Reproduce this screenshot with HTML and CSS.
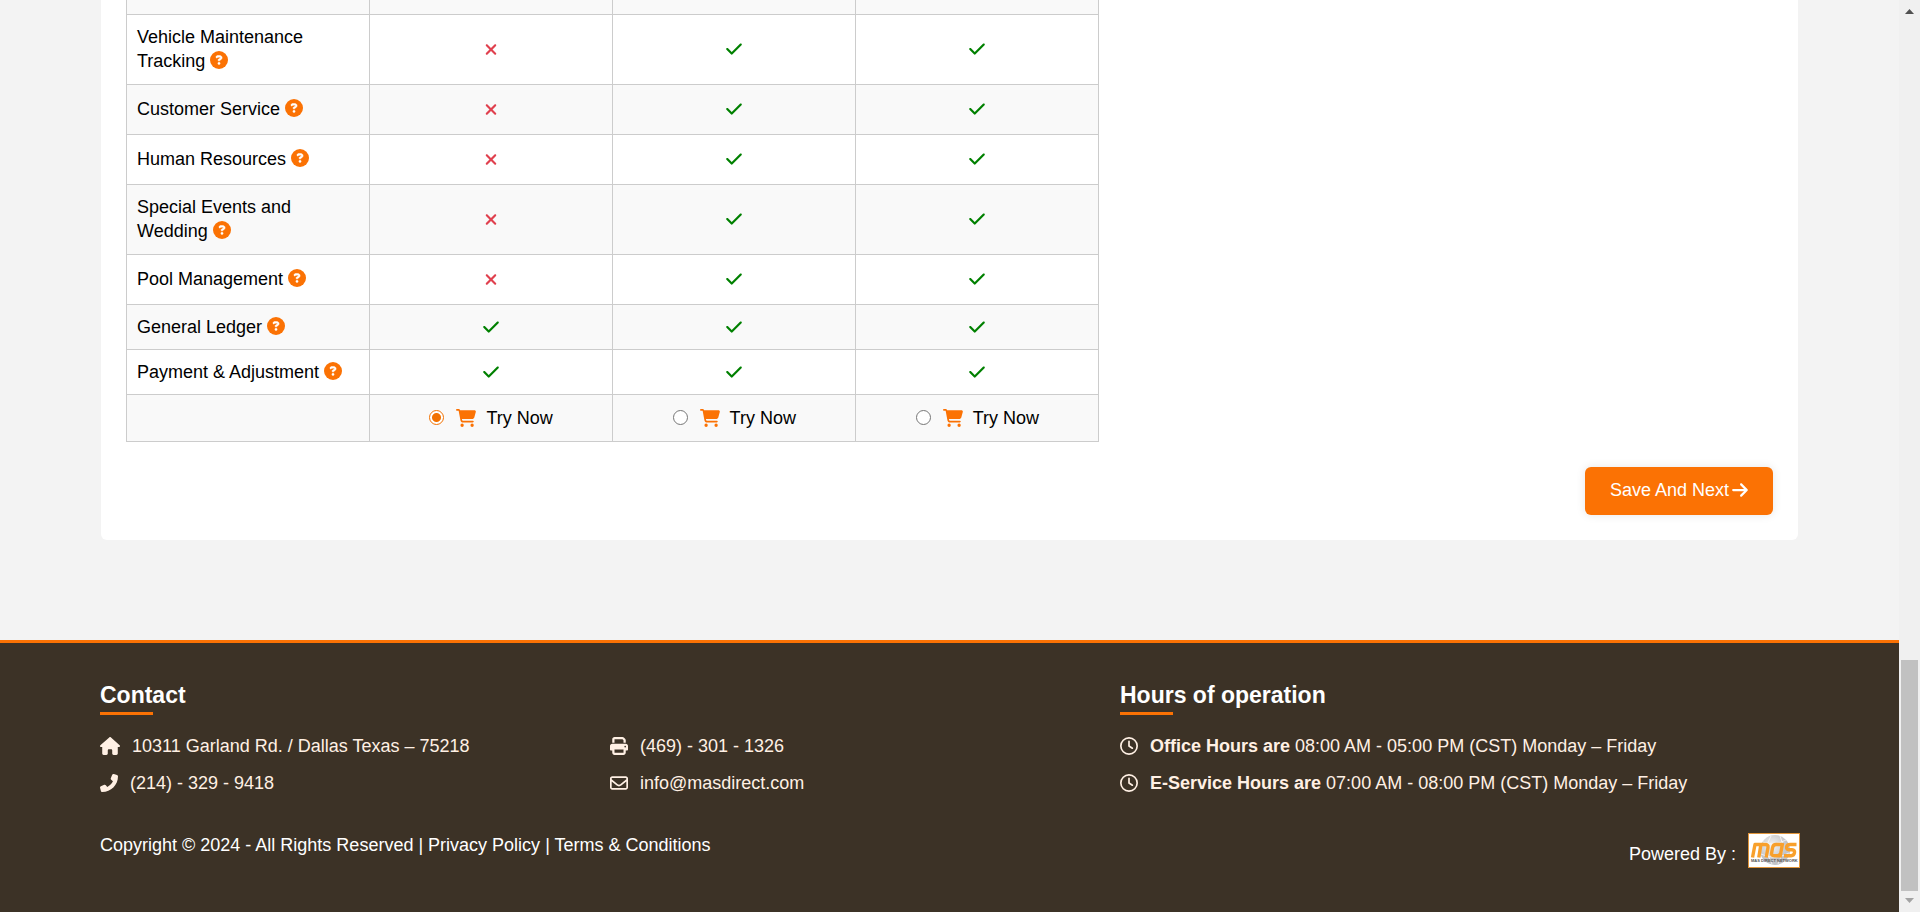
FILE: index.html
```html
<!DOCTYPE html>
<html lang="en">
<head>
<meta charset="utf-8">
<title>Choose a plan</title>
<link rel="stylesheet" href="styles.css">
</head>
<body>
<svg class="sprite" aria-hidden="true">
  <symbol id="help" viewBox="0 0 512 512"><path d="M256 512A256 256 0 1 0 256 0a256 256 0 1 0 0 512z" fill="#fb7204"/><path fill="#fff" stroke="#fff" stroke-width="14" d="M169.8 165.3c7.9-22.3 29.1-37.3 52.8-37.3h58.3c34.9 0 63.1 28.3 63.1 63.1c0 22.6-12.1 43.5-31.7 54.8L280 264.4c-.2 13-10.9 23.6-24 23.6c-13.3 0-24-10.7-24-24V250.5c0-8.6 4.6-16.5 12.1-20.8l44.3-25.4c4.7-2.7 7.6-7.7 7.6-13.1c0-8.4-6.8-15.1-15.1-15.1H222.6c-3.4 0-6.4 2.1-7.5 5.3l-.4 1.2c-4.4 12.5-18.2 19-30.6 14.6s-19-18.2-14.6-30.6l.4-1.2zM224 352a32 32 0 1 1 64 0 32 32 0 1 1 -64 0z"/></symbol>
  <symbol id="check" viewBox="0 0 448 512"><path d="M438.6 105.4c12.5 12.5 12.5 32.8 0 45.3l-256 256c-12.5 12.5-32.8 12.5-45.3 0l-128-128c-12.5-12.5-12.5-32.8 0-45.3s32.8-12.5 45.3 0L160 338.7 393.4 105.4c12.5-12.5 32.8-12.5 45.3 0z"/></symbol>
  <symbol id="cross" viewBox="0 0 384 512"><path d="M342.6 150.6c12.5-12.5 12.5-32.8 0-45.3s-32.8-12.5-45.3 0L192 210.7 86.6 105.4c-12.5-12.5-32.8-12.5-45.3 0s-12.5 32.8 0 45.3L146.7 256 41.4 361.4c-12.5 12.5-12.5 32.8 0 45.3s32.8 12.5 45.3 0L192 301.3 297.4 406.6c12.5 12.5 32.8 12.5 45.3 0s12.5-32.8 0-45.3L237.3 256 342.6 150.6z"/></symbol>
  <symbol id="cart" viewBox="0 0 576 512"><path d="M0 24C0 10.7 10.7 0 24 0H69.5c22 0 41.5 12.8 50.6 32h411c26.3 0 45.5 25 38.6 50.4l-41 152.3c-8.5 31.4-37 53.3-69.5 53.3H170.7l5.4 28.5c2.2 11.3 12.1 19.5 23.6 19.5H488c13.3 0 24 10.7 24 24s-10.7 24-24 24H199.7c-34.6 0-64.3-24.6-70.7-58.5L77.4 54.5c-.7-3.8-4-6.5-7.9-6.5H24C10.7 48 0 37.3 0 24zM128 464a48 48 0 1 1 96 0 48 48 0 1 1 -96 0zm336-48a48 48 0 1 1 0 96 48 48 0 1 1 0-96z"/></symbol>
  <symbol id="arrow" viewBox="0 0 448 512"><path d="M438.6 278.6c12.5-12.5 12.5-32.8 0-45.3l-160-160c-12.5-12.5-32.8-12.5-45.3 0s-12.5 32.8 0 45.3L338.8 224 32 224c-17.7 0-32 14.3-32 32s14.3 32 32 32l306.7 0L233.4 393.4c-12.5 12.5-12.5 32.8 0 45.3s32.8 12.5 45.3 0l160-160z"/></symbol>
  <symbol id="house" viewBox="0 0 576 512"><path d="M575.8 255.5c0 18-15 32.1-32 32.1h-32l.7 160.2c0 2.7-.2 5.4-.5 8.1V472c0 22.1-17.9 40-40 40H456c-1.1 0-2.2 0-3.3-.1c-1.4 .1-2.8 .1-4.2 .1H416 392c-22.1 0-40-17.9-40-40V448 384c0-17.7-14.3-32-32-32H256c-17.7 0-32 14.3-32 32v64 24c0 22.1-17.9 40-40 40H160 128.1c-1.5 0-3-.1-4.5-.2c-1.2 .1-2.4 .2-3.6 .2H104c-22.1 0-40-17.9-40-40V360c0-.9 0-1.9 .1-2.8V287.6H32c-18 0-32-14-32-32.1c0-9 3-17 10-24L266.4 8c7-7 15-8 22-8s15 2 21 7L564.8 231.5c8 7 12 15 11 24z"/></symbol>
  <symbol id="phone" viewBox="0 0 512 512"><path d="M347.1 24.6c7.7-18.6 28-28.5 47.4-23.2l88 24C499.9 30.2 512 46 512 64c0 247.4-200.6 448-448 448c-18 0-33.8-12.1-38.6-29.5l-24-88c-5.3-19.4 4.6-39.7 23.2-47.4l96-40c16.3-6.8 35.2-2.1 46.3 11.6L207.3 368c70.4-33.3 127.4-90.3 160.7-160.7L318.7 167c-13.7-11.2-18.4-30-11.6-46.3l40-96z"/></symbol>
  <symbol id="print" viewBox="0 0 512 512"><path d="M128 0C92.7 0 64 28.7 64 64v96h64V64H354.7L384 93.3V160h64V93.3c0-17-6.7-33.3-18.7-45.3L400 18.7C388 6.7 371.7 0 354.7 0H128zM384 352v32 64H128V384 368 352H384zm64 32h32c17.7 0 32-14.3 32-32V256c0-35.3-28.7-64-64-64H64c-35.3 0-64 28.7-64 64v96c0 17.7 14.3 32 32 32H64v64c0 35.3 28.7 64 64 64H384c35.3 0 64-28.7 64-64V384zM432 248a24 24 0 1 1 0 48 24 24 0 1 1 0-48z"/></symbol>
  <symbol id="mail" viewBox="0 0 512 512"><path d="M64 112c-8.800 0-16 7.200-16 16v22.100L220.500 291.700c20.700 17 50.400 17 71.100 0L464 150.100V128c0-8.800-7.200-16-16-16H64zM48 212.200V384c0 8.800 7.200 16 16 16H448c8.800 0 16-7.200 16-16V212.200L322 328.800c-38.400 31.500-93.700 31.500-132 0L48 212.200zM0 128C0 92.700 28.700 64 64 64H448c35.300 0 64 28.700 64 64V384c0 35.300-28.700 64-64 64H64c-35.300 0-64-28.700-64-64V128z"/></symbol>
  <symbol id="clock" viewBox="0 0 512 512"><path d="M464 256A208 208 0 1 1 48 256a208 208 0 1 1 416 0zM0 256a256 256 0 1 0 512 0A256 256 0 1 0 0 256zM232 120V256c0 8 4 15.500 10.700 20l96 64c11 7.400 25.900 4.400 33.300-6.700s4.400-25.900-6.700-33.300L280 243.200V120c0-13.300-10.700-24-24-24s-24 10.700-24 24z"/></symbol>
</svg>
<div class="page">
  <main class="main">
    <form class="card">
      <table class="plans">
        <tbody>
          <tr class="row-cut"><td></td><td></td><td></td><td></td></tr>
          <tr class="row-tall"><th scope="row">Vehicle Maintenance Tracking <svg class="help"><use href="#help"/></svg></th><td><svg class="icon no"><use href="#cross"/></svg></td><td><svg class="icon yes"><use href="#check"/></svg></td><td><svg class="icon yes"><use href="#check"/></svg></td></tr>
          <tr class="row-mid"><th scope="row">Customer Service <svg class="help"><use href="#help"/></svg></th><td><svg class="icon no"><use href="#cross"/></svg></td><td><svg class="icon yes"><use href="#check"/></svg></td><td><svg class="icon yes"><use href="#check"/></svg></td></tr>
          <tr class="row-mid"><th scope="row">Human Resources <svg class="help"><use href="#help"/></svg></th><td><svg class="icon no"><use href="#cross"/></svg></td><td><svg class="icon yes"><use href="#check"/></svg></td><td><svg class="icon yes"><use href="#check"/></svg></td></tr>
          <tr class="row-tall"><th scope="row">Special Events and Wedding <svg class="help"><use href="#help"/></svg></th><td><svg class="icon no"><use href="#cross"/></svg></td><td><svg class="icon yes"><use href="#check"/></svg></td><td><svg class="icon yes"><use href="#check"/></svg></td></tr>
          <tr class="row-mid"><th scope="row">Pool Management <svg class="help"><use href="#help"/></svg></th><td><svg class="icon no"><use href="#cross"/></svg></td><td><svg class="icon yes"><use href="#check"/></svg></td><td><svg class="icon yes"><use href="#check"/></svg></td></tr>
          <tr class="row-short"><th scope="row">General Ledger <svg class="help"><use href="#help"/></svg></th><td><svg class="icon yes"><use href="#check"/></svg></td><td><svg class="icon yes"><use href="#check"/></svg></td><td><svg class="icon yes"><use href="#check"/></svg></td></tr>
          <tr class="row-short"><th scope="row">Payment &amp; Adjustment <svg class="help"><use href="#help"/></svg></th><td><svg class="icon yes"><use href="#check"/></svg></td><td><svg class="icon yes"><use href="#check"/></svg></td><td><svg class="icon yes"><use href="#check"/></svg></td></tr>
          <tr class="row-try"><td></td>
            <td><label class="try"><input type="radio" name="plan" checked><svg class="cart"><use href="#cart"/></svg>Try Now</label></td>
            <td><label class="try"><input type="radio" name="plan"><svg class="cart"><use href="#cart"/></svg>Try Now</label></td>
            <td><label class="try"><input type="radio" name="plan"><svg class="cart"><use href="#cart"/></svg>Try Now</label></td></tr>
        </tbody>
      </table>
      <div class="actions"><button class="next" type="button">Save And Next <svg class="arrow"><use href="#arrow"/></svg></button></div>
    </form>
  </main>
  <footer class="footer">
    <div class="columns">
      <h2 class="title title-contact">Contact</h2>
      <h2 class="title">Hours of operation</h2>
      <ul class="list">
        <li><svg class="glyph glyph-wide"><use href="#house"/></svg>10311 Garland Rd. / Dallas Texas – 75218</li>
        <li><svg class="glyph"><use href="#phone"/></svg>(214) - 329 - 9418</li>
      </ul>
      <ul class="list">
        <li><svg class="glyph"><use href="#print"/></svg>(469) - 301 - 1326</li>
        <li><svg class="glyph"><use href="#mail"/></svg>info@masdirect.com</li>
      </ul>
      <ul class="list">
        <li><svg class="glyph"><use href="#clock"/></svg><span><b>Office Hours are</b> 08:00 AM - 05:00 PM (CST) Monday – Friday</span></li>
        <li><svg class="glyph"><use href="#clock"/></svg><span><b>E-Service Hours are</b> 07:00 AM - 08:00 PM (CST) Monday – Friday</span></li>
      </ul>
    </div>
    <div class="legal">
      <p class="copyright">Copyright © 2024 - All Rights Reserved | <a href="#">Privacy Policy</a> | <a href="#">Terms &amp; Conditions</a></p>
      <p class="powered">Powered By :
        <svg class="logo" viewBox="0 0 52 35" role="img" aria-label="MAS">
          <defs><radialGradient id="globe" cx="40%" cy="35%"><stop offset="0" stop-color="#f4f4f4"/><stop offset="1" stop-color="#c3c4c7"/></radialGradient></defs>
          <rect x=".5" y=".5" width="51" height="34" fill="#fff" stroke="#e0953b"/>
          <circle cx="27" cy="17" r="15" fill="url(#globe)"/>
          <path d="M15 9q10 5 23-2M13 21q13 7 28-1M23 3q-8 12 1 28M32 3q6 12-2 28" fill="none" stroke="#fff" stroke-width="1" opacity=".7"/>
          <g fill="none" stroke="#f8a02c" stroke-width="3.400" stroke-linejoin="round">
            <path d="M4.500 24.500L7 11.500H17q3.500 0 3 3L18.200 24.500M12.800 12L10.800 24.500"/>
            <path d="M34 11.500H28q-2.800 0-3.400 3l-.9 5q-.6 3.200 2.400 3.200h3.500q2 0 2.500-2M34.600 10L32 24.500"/>
            <path d="M48.500 11.500h-6.500q-3 0-3.400 2.500t2.400 2.800h3q3 .2 2.500 3t-3.400 2.900H36"/>
          </g>
          <text x="3" y="29" class="tagline">MAS DIRECT NETWORK</text>
        </svg>
      </p>
    </div>
  </footer>
</div>
<div class="scrollbar" aria-hidden="true">
  <svg class="scroll-arrow up" viewBox="0 0 9 5"><path d="M0 5L4.500 0 9 5z"/></svg>
  <div class="thumb"></div>
  <svg class="scroll-arrow down" viewBox="0 0 9 5"><path d="M0 0L4.500 5 9 0z"/></svg>
</div>
</body>
</html>
```
FILE: styles.css
```css
* { box-sizing: border-box; }
body {
  margin: 0;
  min-height: 100vh;
  display: flex;
  background: #f3f3f3;
  color: #000;
  font: 18px/24px "Liberation Sans", Arial, sans-serif;
}
.sprite { position: absolute; width: 0; height: 0; }
.page { flex: 1; display: flex; flex-direction: column; }
.main { padding: 0 101px 100px; }
.card {
  background: #fff;
  padding: 0 25px 25px;
  border-radius: 0 0 6px 6px;
}
.plans {
  width: 59.1%;
  table-layout: fixed;
  border-collapse: collapse;
  border: 1px solid #ccc;
  border-top: 0;
}
.plans th, .plans td { border: 1px solid #ccc; padding: 0 10px; vertical-align: middle; }
.plans th { text-align: left; font-weight: 400; }
.plans td { text-align: center; }
.plans tr:nth-child(odd) { background: #f9f9f9; }
.plans .row-cut td { border-top: 0; }
.row-cut { height: 14px; }
.row-tall { height: 70px; }
.row-mid { height: 50px; }
.row-short { height: 45px; }
.row-try { height: 47px; }
.help { width: 18px; height: 18px; vertical-align: -2px; }
.icon { width: 18px; height: 18px; display: block; margin: 0 auto; }
.yes { fill: #008000; }
.no { height: 17px; fill: #e0404e; }
.try { display: flex; align-items: center; justify-content: center; }
.try input {
  appearance: none;
  width: 15px;
  height: 15px;
  margin: 0 12px 0 0;
  border: 1px solid #767676;
  border-radius: 50%;
  background: #fff;
}
.try input:checked {
  border: 1px solid #f27100;
  background: radial-gradient(circle, #f27100 4px, #fff 5px);
}
.cart { width: 20px; height: 18px; margin-right: 10px; fill: #fb7204; }
.actions { display: flex; justify-content: flex-end; margin-top: 25px; }
.next {
  display: flex;
  align-items: center;
  gap: 3px;
  height: 48px;
  padding: 0 25px 2px;
  border: 0;
  border-radius: 6px;
  background: #fb7204;
  color: #fff;
  font: inherit;
  box-shadow: 0 0 10px rgba(0, 0, 0, .1);
}
.arrow { width: 16px; height: 18px; fill: #fff; }
.footer {
  flex: 1;
  padding: 36px 99px 0 100px;
  border-top: 3px solid #fb7204;
  background: #3c3226;
  color: #fff;
}
.columns { display: grid; grid-template-columns: 3fr 3fr 4fr; }
.title { margin: 0 0 19px; font-size: 23px; line-height: 32px; }
.title::after { content: ""; display: block; width: 53px; height: 3px; margin-top: 1px; background: #fb7204; }
.title-contact { grid-column: span 2; }
.list { display: grid; gap: 13px; margin: 0; padding: 0; list-style: none; color: #fff0e4; }
.list li { display: flex; align-items: center; gap: 12px; }
.glyph { width: 18px; height: 18px; fill: #fff0e4; }
.glyph-wide { width: 20px; }
.legal { display: flex; justify-content: space-between; margin-top: 38px; }
.legal p { margin: 0; }
.legal a { color: inherit; text-decoration: none; }
.powered { display: flex; align-items: flex-end; gap: 12px; line-height: 28px; }
.logo { width: 52px; height: 35px; }
.tagline { font: bold 4px "Liberation Sans", Arial, sans-serif; fill: #555; }
.scrollbar {
  width: 21px;
  display: flex;
  flex-direction: column;
  align-items: center;
  padding: 9px 0;
  background: #f0f0f0;
}
.scroll-arrow { width: 9px; height: 5px; }
.up { fill: #505050; }
.down { fill: #a3a3a3; margin-top: 7px; }
.thumb { width: 17px; height: 231px; margin-top: auto; background: #c1c1c1; }
```
